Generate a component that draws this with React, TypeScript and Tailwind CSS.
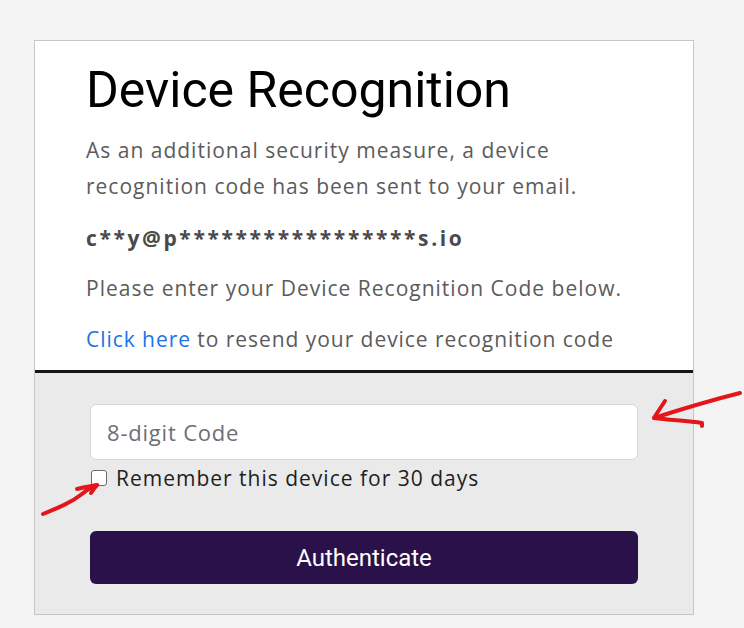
export default function App() {
  return (
    <div className="relative min-h-[628px] w-[744px] bg-[#f4f4f4] pt-10 pl-[34px] font-['Roboto',sans-serif]">
      <div className="w-[660px] border border-[#c6c6c6] bg-white">
        <div className="px-[51px] pt-[19px] pb-[13px]">
          <h1 className="text-[50px] leading-[60px] font-normal text-black">Device Recognition</h1>
          <p className="mt-[12px] text-[21px] leading-[36px] tracking-[1px] text-[#5b5b5b] font-['Open_Sans',sans-serif]">
            As an additional security measure, a device recognition code has been sent to your email.
          </p>
          <p className="mt-4 text-[21px] leading-[36px] tracking-[2.6px] font-bold text-[#4a4a4a] font-['Open_Sans',sans-serif]">
            c**y@p*****************s.io
          </p>
          <p className="mt-[14px] text-[21px] leading-[36px] tracking-[1px] text-[#5b5b5b] font-['Open_Sans',sans-serif]">
            Please enter your Device Recognition Code below.
          </p>
          <p className="mt-[15px] text-[21px] leading-[36px] tracking-[0.95px] text-[#5b5b5b] font-['Open_Sans',sans-serif]">
            <a className="text-[#1a73e8]">Click here</a> to resend your device recognition code
          </p>
        </div>
        <div className="h-[3px] bg-[#161616]" />
        <div className="bg-[#eaeaea] px-[55px] pt-[31px] pb-[30px]">
          <input
            placeholder="8-digit Code"
            className="h-[56px] w-full rounded-md border border-[#d6d6d6] bg-white px-4 text-[22px] tracking-[0.8px] text-[#222] placeholder:text-[#6e6e76] outline-none font-['Open_Sans',sans-serif]"
          />
          <label className="mt-[6px] flex items-center gap-[9px] text-[21px] leading-[24px] tracking-[1px] text-[#1e1e1e] font-['Open_Sans',sans-serif]">
            <span className="ml-[1px] h-[16px] w-[16px] rounded-[3px] border border-[#6b6b6b] bg-white" />
            Remember this device for 30 days
          </label>
          <button className="mt-[41px] h-[53px] w-full rounded-md bg-[#2a1149] text-[24px] text-white">
            Authenticate
          </button>
        </div>
      </div>

      {/* annotation arrows */}
      <svg className="absolute left-0 top-0" width="744" height="628" viewBox="0 0 744 628" fill="none">
        <g stroke="#e3161b" strokeWidth="4" strokeLinecap="round" strokeLinejoin="round">
          <path d="M740 393 C 712 400, 682 409, 654 418" />
          <path d="M665 401 C 661 407, 657 413, 654 418 C 670 420, 688 421, 702 423 L 702 426" />
          <path d="M43 514 C 60 507, 72 502, 82 494 C 88 489, 92 486, 97 485" />
          <path d="M77 489 C 84 487, 91 486, 97 485 C 95 487, 93 490, 91 493" />
        </g>
      </svg>
    </div>
  );
}
